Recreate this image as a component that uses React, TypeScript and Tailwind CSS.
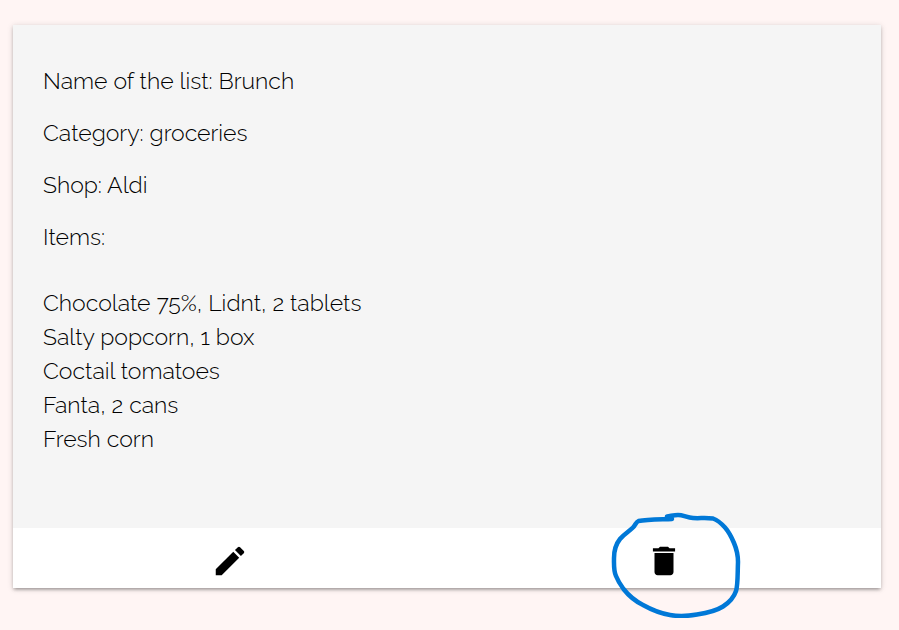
import { MdDelete, MdEdit } from "react-icons/md";

const details = [
  "Name of the list: Brunch",
  "Category: groceries",
  "Shop: Aldi",
  "Items:",
];

const items = [
  "Chocolate 75%, Lidnt, 2 tablets",
  "Salty popcorn, 1 box",
  "Coctail tomatoes",
  "Fanta, 2 cans",
  "Fresh corn",
];

function PenCircle() {
  return (
    <svg
      className="pointer-events-none absolute left-1/2 -top-4 -ml-[53px] h-[106px] w-[131px]"
      viewBox="0 0 131 106"
      fill="none"
      stroke="#0078d7"
      strokeWidth="4.5"
      strokeLinecap="round"
      strokeLinejoin="round"
      aria-hidden="true"
    >
      <path d="M61 7C50 7.500 36 7.500 27.500 9C25 10 24.500 13 22 15.500C18 19.500 13 22 9 27C5 32 3 39 3 46C3 53 2.500 59 5 64C7 69 9.500 73 12.500 77C18 84 24 89 32 93C41 98 50 101.500 59 103C67 104.500 78 104 86 102.500C96 101 105 99 112 94.500C119 90 123 85 125 79C127 73 126.500 62 127 50C127 43 126 38 123 31C120.500 25 118 20 114 15.500C110 11 106 8 102 6.500C95 5.500 88 6.500 82 6C76 5.500 72 3 67 3C63 3 60 4 56 4.500" />
    </svg>
  );
}

export default function App() {
  return (
    <main className="min-h-screen bg-[#fff5f4] pt-[25px] pr-[18px] pb-10 pl-[13px] font-['Raleway','Lato',sans-serif] text-black">
      <article className="bg-[#f5f5f5] shadow-[0_3px_3px_-2px_rgba(0,0,0,0.2),0_2px_3px_0_rgba(0,0,0,0.14),0_1px_6px_0_rgba(0,0,0,0.16)]">
        <div className="px-[30px] pt-[39px] pb-[72px] text-[23px] leading-[34px] font-light">
          <div className="flex flex-col gap-[18px]">
            {details.map((line) => (
              <p key={line}>{line}</p>
            ))}
          </div>
          <ul className="mt-8">
            {items.map((item) => (
              <li key={item}>{item}</li>
            ))}
          </ul>
        </div>
        <footer className="grid grid-cols-2 bg-white">
          <button
            type="button"
            aria-label="Edit list"
            className="flex h-[60px] items-center justify-center pt-1.5"
          >
            <MdEdit className="size-[38px]" />
          </button>
          <div className="relative">
            <button
              type="button"
              aria-label="Delete list"
              className="flex h-[60px] w-full items-center justify-center pt-1.5"
            >
              <MdDelete className="size-[38px]" />
            </button>
            <PenCircle />
          </div>
        </footer>
      </article>
    </main>
  );
}
